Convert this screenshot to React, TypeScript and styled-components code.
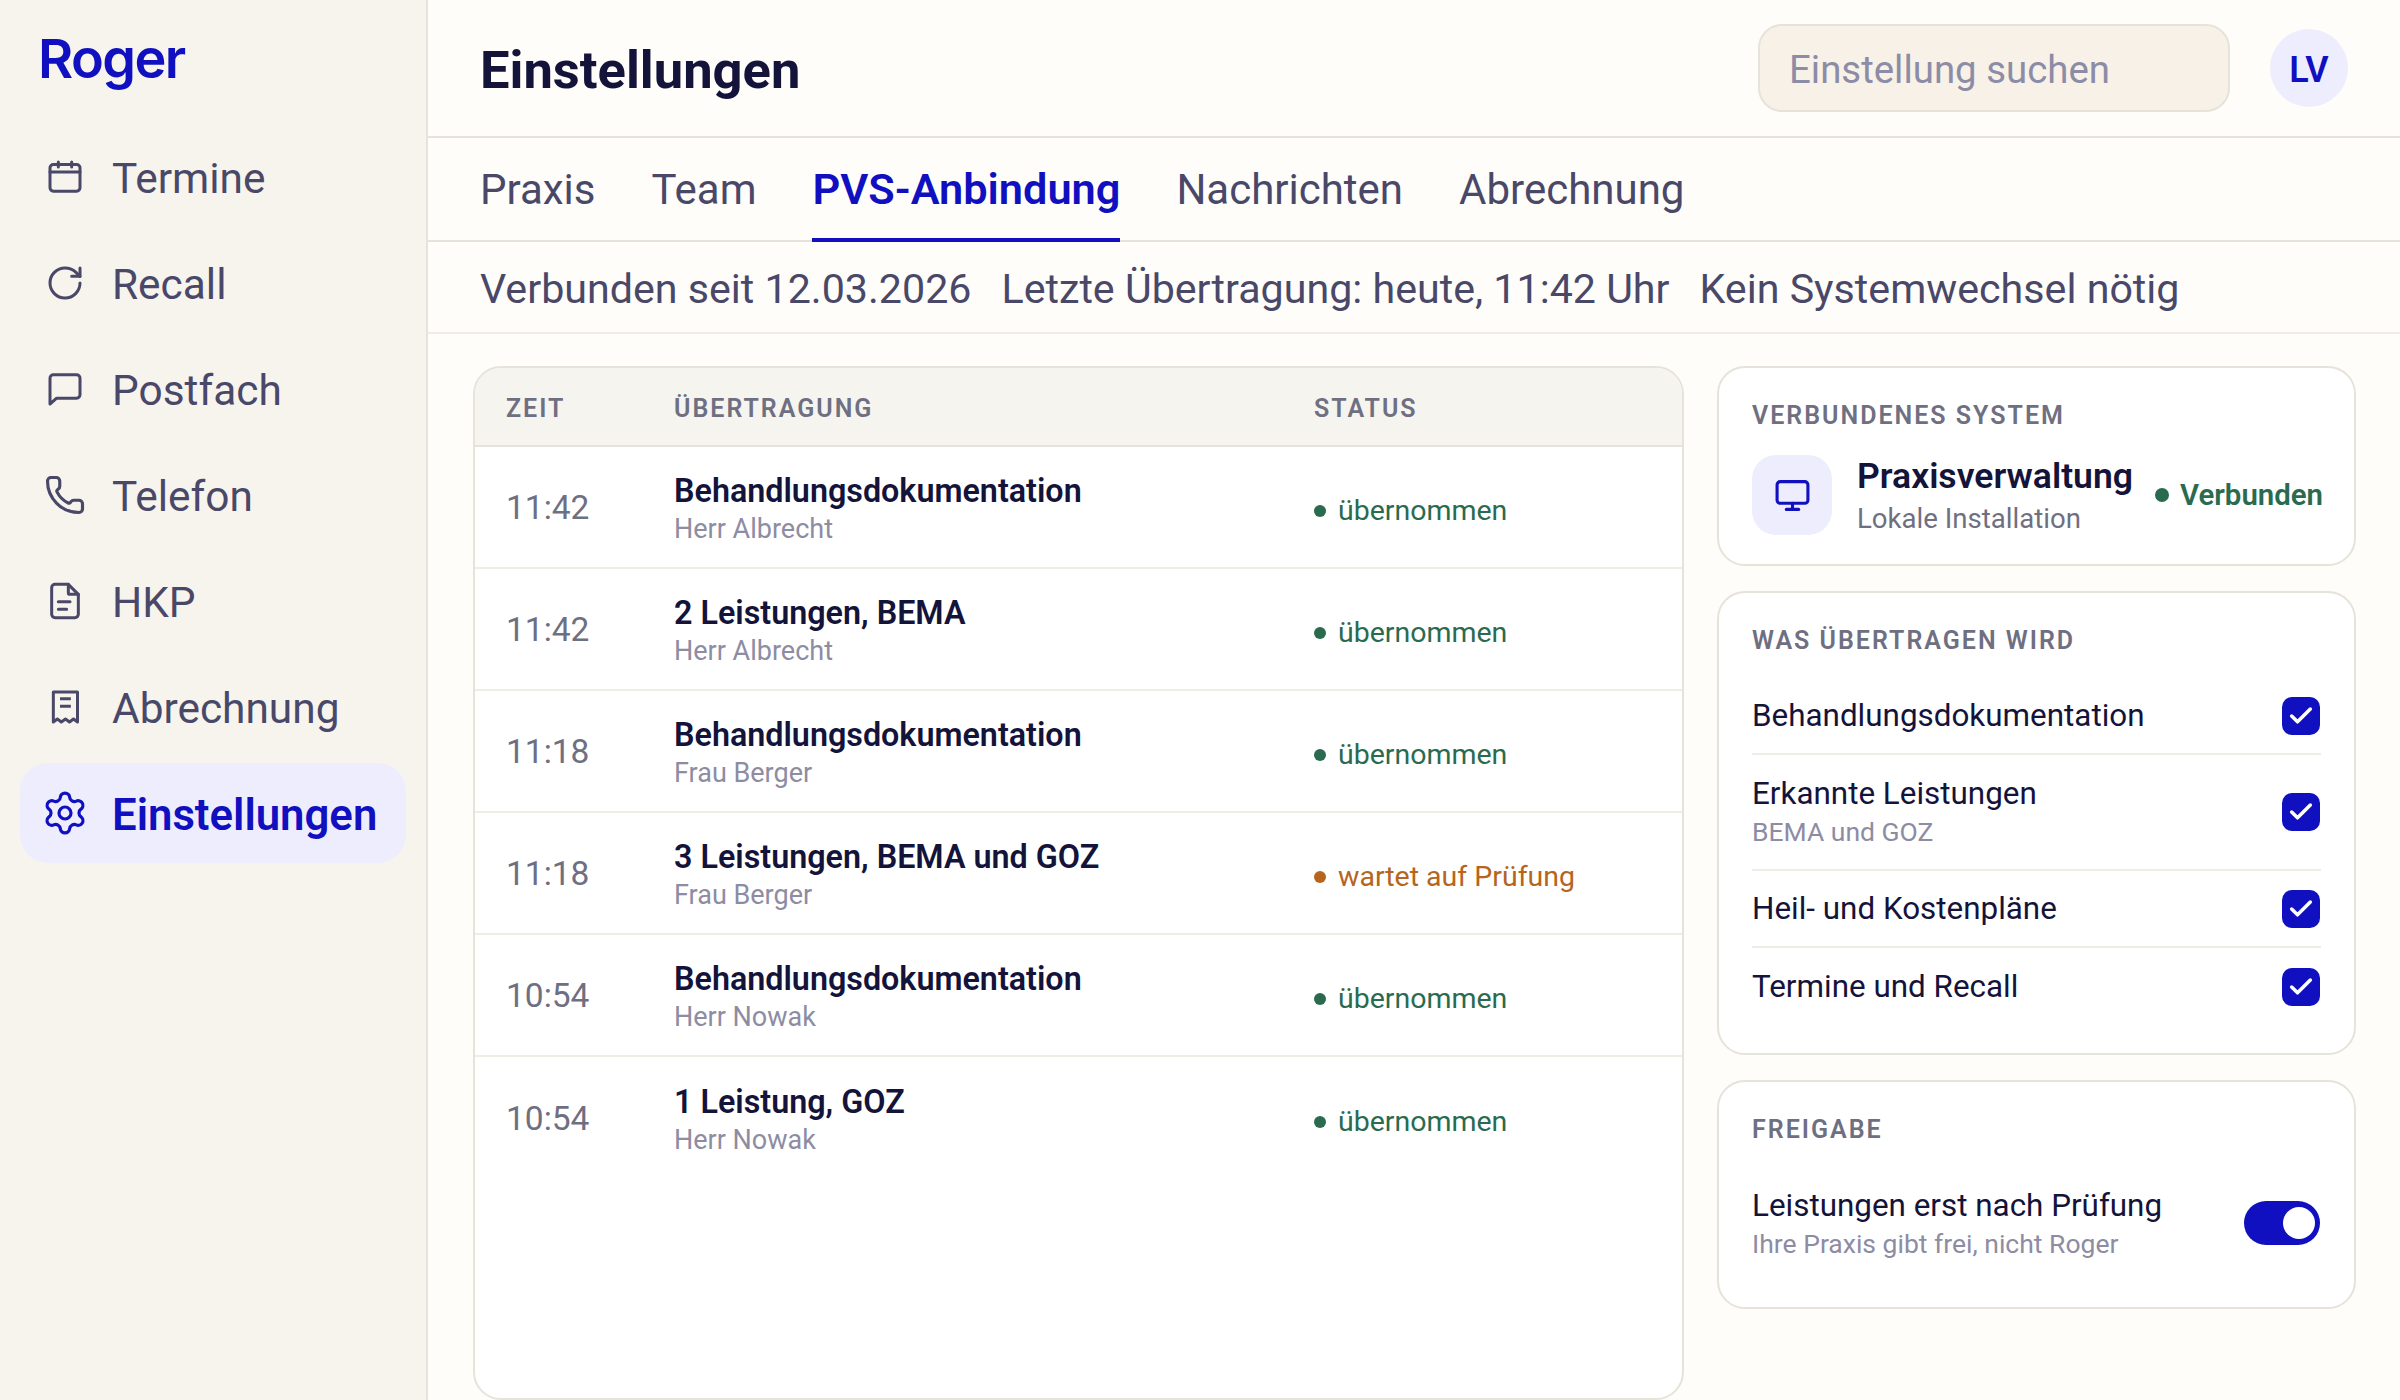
import { Monitor, Phone, RotateCw, Settings, Check } from 'lucide-react'
import styled, { createGlobalStyle } from 'styled-components'

const GlobalStyle = createGlobalStyle`
    * {
        box-sizing: border-box;
    }

    html,
    body {
        margin: 0;
        height: 1400px;
        overflow: hidden;
        background: #fefdfa;
        font-family: Roboto, 'Liberation Sans', sans-serif;
        color: #14133a;
    }
`

const Page = styled.div`
    display: grid;
    grid-template-columns: 428px 1fr;
    height: 1400px;
`

const Sidebar = styled.aside`
    background: #f7f4ee;
    border-right: 2px solid #e6e3da;
    padding: 0 20px;
`

const Logo = styled.div`
    font-family: Inter, sans-serif;
    font-size: 54px;
    line-height: 60px;
    font-weight: 600;
    letter-spacing: -1.6px;
    color: #1010c0;
    padding: 29px 0 0 18px;
    height: 127px;
`

const NavList = styled.nav`
    display: flex;
    flex-direction: column;
    gap: 6px;
`

const NavItem = styled.a<{ $active?: boolean }>`
    display: flex;
    align-items: center;
    gap: 27px;
    height: 100px;
    padding-left: 25px;
    border-radius: 28px;
    font-size: ${({ $active }) => ($active ? 43.7 : 42.4)}px;
    font-weight: ${({ $active }) => ($active ? 600 : 400)};
    color: ${({ $active }) => ($active ? '#1010c0' : '#4a4868')};
    background: ${({ $active }) => ($active ? '#eeedfd' : 'transparent')};
`

const NavIcon = styled.span`
    display: flex;
    align-items: center;
    justify-content: center;
    width: 40px;
    height: 40px;
    flex: none;

    svg {
        flex: none;
    }
`

const NavLabel = styled.span`
    padding-top: 3px;
`

const Main = styled.main`
    display: flex;
    flex-direction: column;
    min-width: 0;
`

const TopBar = styled.header`
    display: flex;
    align-items: center;
    height: 138px;
    padding: 0 52px 0 52px;
    border-bottom: 2px solid #e6e3da;
`

const Title = styled.h1`
    flex: 1;
    margin: 0;
    padding-top: 3px;
    font-size: 52.5px;
    font-weight: 700;
    color: #14133a;
`

const Search = styled.div`
    display: flex;
    align-items: center;
    width: 472px;
    height: 88px;
    padding: 2px 0 0 29px;
    border: 2px solid #e6e3da;
    border-radius: 24px;
    background: #f8f1e7;
    font-size: 38.4px;
    color: #8d8ca6;
`

const Avatar = styled.div`
    display: flex;
    align-items: center;
    justify-content: center;
    width: 78px;
    height: 78px;
    margin-left: 40px;
    padding-top: 3px;
    border-radius: 50%;
    background: #eeedfd;
    color: #1010c0;
    font-size: 36px;
    font-weight: 600;
`

const Tabs = styled.div`
    display: flex;
    gap: 56px;
    height: 104px;
    padding-left: 52px;
    border-bottom: 2px solid #e6e3da;
`

const Tab = styled.a<{ $active?: boolean }>`
    display: flex;
    align-items: center;
    height: 104px;
    padding-top: 3px;
    font-size: ${({ $active }) => ($active ? 43.3 : 42)}px;
    font-weight: ${({ $active }) => ($active ? 600 : 400)};
    color: ${({ $active }) => ($active ? '#1010c0' : '#4a4868')};
    border-bottom: 4px solid ${({ $active }) => ($active ? '#1010c0' : 'transparent')};
`

const InfoStrip = styled.div`
    display: flex;
    align-items: center;
    gap: 30px;
    height: 92px;
    padding: 3px 0 0 52px;
    border-bottom: 2px solid #efede6;
    font-size: 41.2px;
    color: #4a4868;
`

const Content = styled.div`
    flex: 1;
    display: grid;
    grid-template-columns: 1211px 639px;
    gap: 33px;
    padding: 32px 0 0 45px;
    min-height: 0;
`

const TableCard = styled.section`
    height: 1034px;
    border: 2px solid #e6e3da;
    border-radius: 28px;
    background: #fff;
    overflow: hidden;
`

const tableColumns = '168px 640px 1fr'

const TableHead = styled.div`
    display: grid;
    grid-template-columns: ${tableColumns};
    align-items: center;
    height: 79px;
    padding: 3px 0 0 31px;
    background: #f5f4ef;
    border-bottom: 2px solid #e6e3da;
`

const Caps = styled.span`
    font-size: 25px;
    font-weight: 600;
    letter-spacing: 2px;
    color: #6f6f82;
`

const TableRow = styled.div`
    display: grid;
    grid-template-columns: ${tableColumns};
    align-items: center;
    height: 122px;
    padding-left: 31px;
    border-bottom: 2px solid #efede6;

    &:last-child {
        border-bottom: 0;
    }
`

const Time = styled.span`
    font-size: 33.5px;
    color: #6f6f82;
`

const RowText = styled.div`
    padding-top: 3px;
`

const RowTitle = styled.div`
    font-size: 32.3px;
    line-height: 40px;
    font-weight: 600;
    color: #14133a;
`

const RowSub = styled.div`
    font-size: 27px;
    line-height: 36px;
    color: #8d8ca3;
`

const Status = styled.span<{ $waiting?: boolean }>`
    display: flex;
    align-items: center;
    gap: 12px;
    margin-top: 7px;
    font-size: 28.5px;
    color: ${({ $waiting }) => ($waiting ? '#b5651d' : '#2a6b4f')};

    &::before {
        content: '';
        width: 12px;
        height: 12px;
        border-radius: 50%;
        background: currentColor;
    }
`

const SideColumn = styled.div`
    display: flex;
    flex-direction: column;
    gap: 25px;
`

const Card = styled.section<{ $height: number }>`
    height: ${({ $height }) => $height}px;
    padding: 32px 33px;
    border: 2px solid #e6e3da;
    border-radius: 28px;
    background: #fff;
`

const CardLabel = styled(Caps)`
    display: block;
    line-height: 32px;
`

const SystemRow = styled.div`
    display: flex;
    align-items: center;
    margin-top: 21px;
`

const SystemIcon = styled.div`
    display: flex;
    align-items: center;
    justify-content: center;
    width: 80px;
    height: 80px;
    border-radius: 24px;
    background: #eeedfd;
    color: #1010c0;
`

const SystemText = styled.div`
    flex: 1;
    margin-left: 25px;
`

const SystemName = styled.div`
    font-size: 35.6px;
    line-height: 46px;
    font-weight: 600;
    margin-bottom: 2px;
`

const SystemSub = styled.div`
    font-size: 27.6px;
    line-height: 36px;
    color: #6f6f82;
`

const Connected = styled.span`
    display: flex;
    align-items: center;
    gap: 11px;
    margin-right: -2px;
    font-size: 29.4px;
    font-weight: 600;
    color: #2a6b4f;

    &::before {
        content: '';
        width: 14px;
        height: 14px;
        border-radius: 50%;
        background: currentColor;
    }
`

const CheckList = styled.div`
    margin-top: 21px;
`

const CheckRow = styled.div<{ $tall?: boolean }>`
    display: flex;
    align-items: center;
    justify-content: space-between;
    height: ${({ $tall }) => ($tall ? 116 : 77)}px;
    border-bottom: 2px solid #efede6;

    &:last-child {
        border-bottom: 0;
    }
`

const ItemLabel = styled.div`
    font-size: 31.4px;
    line-height: 40px;
    color: #14133a;
`

const ItemSub = styled.div`
    font-size: 26.5px;
    line-height: 36px;
    color: #8d8ca3;
`

const CheckBox = styled.span`
    display: flex;
    align-items: center;
    justify-content: center;
    width: 38px;
    height: 38px;
    margin-right: 1px;
    border-radius: 10px;
    background: #1010c0;
    color: #fff;
`

const ToggleRow = styled.div`
    display: flex;
    align-items: center;
    justify-content: space-between;
    margin-top: 40px;
`

const Toggle = styled.span`
    display: flex;
    align-items: center;
    justify-content: flex-end;
    width: 76px;
    height: 44px;
    margin: 0 1px 2px 0;
    padding-right: 5px;
    border-radius: 22px;
    background: #1010c0;

    &::after {
        content: '';
        width: 32px;
        height: 32px;
        border-radius: 50%;
        background: #fff;
    }
`

const iconStroke = 1.8

const CalendarIcon = () => (
    <svg width="40" height="40" viewBox="0 0 24 24" fill="none" stroke="currentColor" strokeWidth={iconStroke} strokeLinecap="round" strokeLinejoin="round">
        <rect x="3" y="4.5" width="18" height="16" rx="2" />
        <path d="M3 9h18M8 3v3M16 3v3" />
    </svg>
)

const MessageIcon = () => (
    <svg width="40" height="40" viewBox="0 0 24 24" fill="none" stroke="currentColor" strokeWidth={iconStroke} strokeLinecap="round" strokeLinejoin="round">
        <path d="M3 5.5a2 2 0 0 1 2-2h14a2 2 0 0 1 2 2v10a2 2 0 0 1-2 2H7l-4 3.5z" />
    </svg>
)

const FileIcon = () => (
    <svg width="40" height="40" viewBox="0 0 24 24" fill="none" stroke="currentColor" strokeWidth={iconStroke} strokeLinecap="round" strokeLinejoin="round">
        <path d="M14 2H6a2 2 0 0 0-2 2v16a2 2 0 0 0 2 2h12a2 2 0 0 0 2-2V8z" />
        <path d="M14 2v5a1 1 0 0 0 1 1h5M8 12.5h7M8 17h5" />
    </svg>
)

const ReceiptIcon = () => (
    <svg width="40" height="40" viewBox="0 0 24 24" fill="none" stroke="currentColor" strokeWidth={iconStroke} strokeLinejoin="round">
        <path d="M5 3h14.5v18l-2.4-1.8-2.4 1.8-2.4-1.8-2.5 1.8-2.4-1.8L5 21z" />
        <path d="M9 7h6.5M9 11.5h6.5" />
    </svg>
)

const navItems = [
    { label: 'Termine', icon: <CalendarIcon /> },
    { label: 'Recall', icon: <RotateCw size={40} strokeWidth={iconStroke} /> },
    { label: 'Postfach', icon: <MessageIcon /> },
    { label: 'Telefon', icon: <Phone size={42} strokeWidth={iconStroke} /> },
    { label: 'HKP', icon: <FileIcon /> },
    { label: 'Abrechnung', icon: <ReceiptIcon /> },
    { label: 'Einstellungen', icon: <Settings size={48} strokeWidth={1.6} />, active: true },
]

const tabs = ['Praxis', 'Team', 'PVS-Anbindung', 'Nachrichten', 'Abrechnung']

const rows = [
    { time: '11:42', title: 'Behandlungsdokumentation', sub: 'Herr Albrecht', status: 'übernommen' },
    { time: '11:42', title: '2 Leistungen, BEMA', sub: 'Herr Albrecht', status: 'übernommen' },
    { time: '11:18', title: 'Behandlungsdokumentation', sub: 'Frau Berger', status: 'übernommen' },
    { time: '11:18', title: '3 Leistungen, BEMA und GOZ', sub: 'Frau Berger', status: 'wartet auf Prüfung', waiting: true },
    { time: '10:54', title: 'Behandlungsdokumentation', sub: 'Herr Nowak', status: 'übernommen' },
    { time: '10:54', title: '1 Leistung, GOZ', sub: 'Herr Nowak', status: 'übernommen' },
]

const transferred = [
    { label: 'Behandlungsdokumentation' },
    { label: 'Erkannte Leistungen', sub: 'BEMA und GOZ' },
    { label: 'Heil- und Kostenpläne' },
    { label: 'Termine und Recall' },
]

export default function App() {
    return (
        <>
            <GlobalStyle />
            <Page>
                <Sidebar>
                    <Logo>Roger</Logo>
                    <NavList>
                        {navItems.map(({ label, icon, active }) => (
                            <NavItem key={label} $active={active}>
                                <NavIcon>{icon}</NavIcon>
                                <NavLabel>{label}</NavLabel>
                            </NavItem>
                        ))}
                    </NavList>
                </Sidebar>
                <Main>
                    <TopBar>
                        <Title>Einstellungen</Title>
                        <Search>Einstellung suchen</Search>
                        <Avatar>LV</Avatar>
                    </TopBar>
                    <Tabs>
                        {tabs.map(tab => (
                            <Tab key={tab} $active={tab === 'PVS-Anbindung'}>
                                {tab}
                            </Tab>
                        ))}
                    </Tabs>
                    <InfoStrip>
                        <span>Verbunden seit 12.03.2026</span>
                        <span>Letzte Übertragung: heute, 11:42 Uhr</span>
                        <span>Kein Systemwechsel nötig</span>
                    </InfoStrip>
                    <Content>
                        <TableCard>
                            <TableHead>
                                <Caps>ZEIT</Caps>
                                <Caps>ÜBERTRAGUNG</Caps>
                                <Caps>STATUS</Caps>
                            </TableHead>
                            {rows.map((row, i) => (
                                <TableRow key={i}>
                                    <Time>{row.time}</Time>
                                    <RowText>
                                        <RowTitle>{row.title}</RowTitle>
                                        <RowSub>{row.sub}</RowSub>
                                    </RowText>
                                    <Status $waiting={row.waiting}>{row.status}</Status>
                                </TableRow>
                            ))}
                        </TableCard>
                        <SideColumn>
                            <Card $height={200}>
                                <CardLabel>VERBUNDENES SYSTEM</CardLabel>
                                <SystemRow>
                                    <SystemIcon>
                                        <Monitor size={37} strokeWidth={2} />
                                    </SystemIcon>
                                    <SystemText>
                                        <SystemName>Praxisverwaltung</SystemName>
                                        <SystemSub>Lokale Installation</SystemSub>
                                    </SystemText>
                                    <Connected>Verbunden</Connected>
                                </SystemRow>
                            </Card>
                            <Card $height={464}>
                                <CardLabel>WAS ÜBERTRAGEN WIRD</CardLabel>
                                <CheckList>
                                    {transferred.map(({ label, sub }) => (
                                        <CheckRow key={label} $tall={!!sub}>
                                            <div>
                                                <ItemLabel>{label}</ItemLabel>
                                                {sub && <ItemSub>{sub}</ItemSub>}
                                            </div>
                                            <CheckBox>
                                                <Check size={28} strokeWidth={3} />
                                            </CheckBox>
                                        </CheckRow>
                                    ))}
                                </CheckList>
                            </Card>
                            <Card $height={229}>
                                <CardLabel>FREIGABE</CardLabel>
                                <ToggleRow>
                                    <div>
                                        <ItemLabel>Leistungen erst nach Prüfung</ItemLabel>
                                        <ItemSub>Ihre Praxis gibt frei, nicht Roger</ItemSub>
                                    </div>
                                    <Toggle />
                                </ToggleRow>
                            </Card>
                        </SideColumn>
                    </Content>
                </Main>
            </Page>
        </>
    )
}
